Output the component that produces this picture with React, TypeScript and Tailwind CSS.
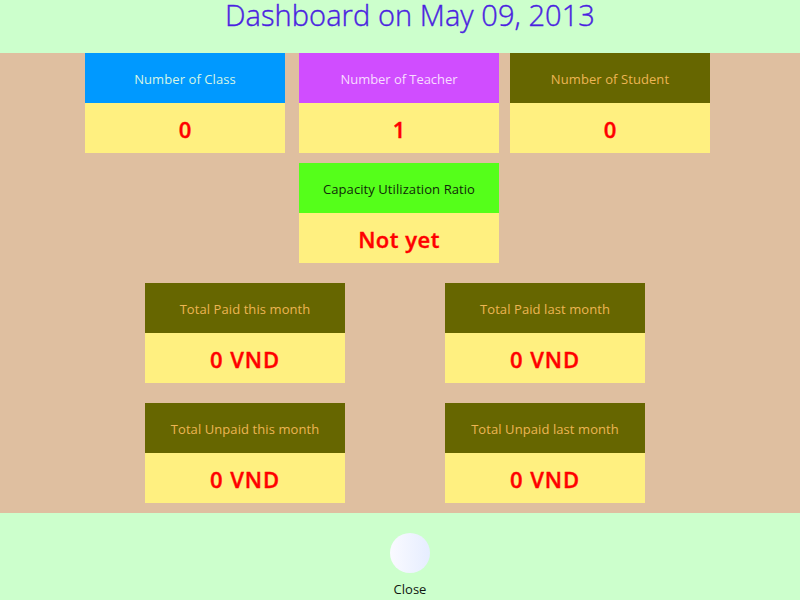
type CardProps = {
  label: string;
  value: string;
  head: string;
  labelTracking?: string;
  valueTracking?: string;
};

const OLIVE = "bg-[#666600] text-[#edb553]";

function Card({ label, value, head, labelTracking = "tracking-[0.08px]", valueTracking = "" }: CardProps) {
  return (
    <section className="w-[200px] shrink-0 text-center whitespace-nowrap">
      <h2 className={`h-[50px] pt-px text-[13px] leading-[50px] ${head} ${labelTracking}`}>{label}</h2>
      <p className={`h-[50px] bg-[#fff080] pt-px text-[22px] leading-[50px] font-semibold text-[#ff0000] [-webkit-text-stroke:0.4px_#ff0000] ${valueTracking}`}>
        {value}
      </p>
    </section>
  );
}

export default function App() {
  return (
    <div className="flex h-[600px] w-[800px] flex-col overflow-hidden bg-[#ccffcc] font-['Open_Sans','Noto_Sans',sans-serif]">
      <header className="h-[53px] shrink-0 pl-[20px] text-center">
        <h1 className="text-[29px] leading-[30px] font-light tracking-[0.07px] whitespace-nowrap text-[#4b1fe0] [-webkit-text-stroke:0.4px_#4b1fe0]">
          Dashboard on May 09, 2013
        </h1>
      </header>

      <main className="h-[460px] shrink-0 bg-[#dfbfa0]">
        <div className="flex pl-[85px]">
          <Card label="Number of Class" value="0" head="bg-[#0099ff] text-[#d5f5e6]" />
          <div className="ml-[14px] mr-[11px]">
            <Card label="Number of Teacher" value="1" head="bg-[#d04dff] text-[#f8dcff]" labelTracking="tracking-[-0.05px]" />
          </div>
          <Card label="Number of Student" value="0" head={OLIVE} />
        </div>
        <div className="mt-2.5 pl-[299px]">
          <Card label="Capacity Utilization Ratio" value="Not yet" head="bg-[#55ff1a] text-[#102a08]" valueTracking="tracking-[0.5px]" />
        </div>
        <div className="mt-5 grid grid-cols-[200px_200px] gap-x-[100px] gap-y-5 pl-[145px]">
          <Card label="Total Paid this month" value="0 VND" head={OLIVE} valueTracking="tracking-[0.9px]" />
          <Card label="Total Paid last month" value="0 VND" head={OLIVE} valueTracking="tracking-[0.9px]" />
          <Card label="Total Unpaid this month" value="0 VND" head={OLIVE} valueTracking="tracking-[0.9px]" />
          <Card label="Total Unpaid last month" value="0 VND" head={OLIVE} valueTracking="tracking-[0.9px]" />
        </div>
      </main>

      <footer className="flex h-[87px] shrink-0 justify-center pl-5 pt-5">
        <button type="button" className="flex flex-col items-center text-[13px] leading-[18px] text-[#101810]">
          <span className="mb-[7px] size-10 shrink-0 rounded-full bg-linear-to-r from-[#fafaff] to-[#e6edff]" />
          Close
        </button>
      </footer>
    </div>
  );
}
